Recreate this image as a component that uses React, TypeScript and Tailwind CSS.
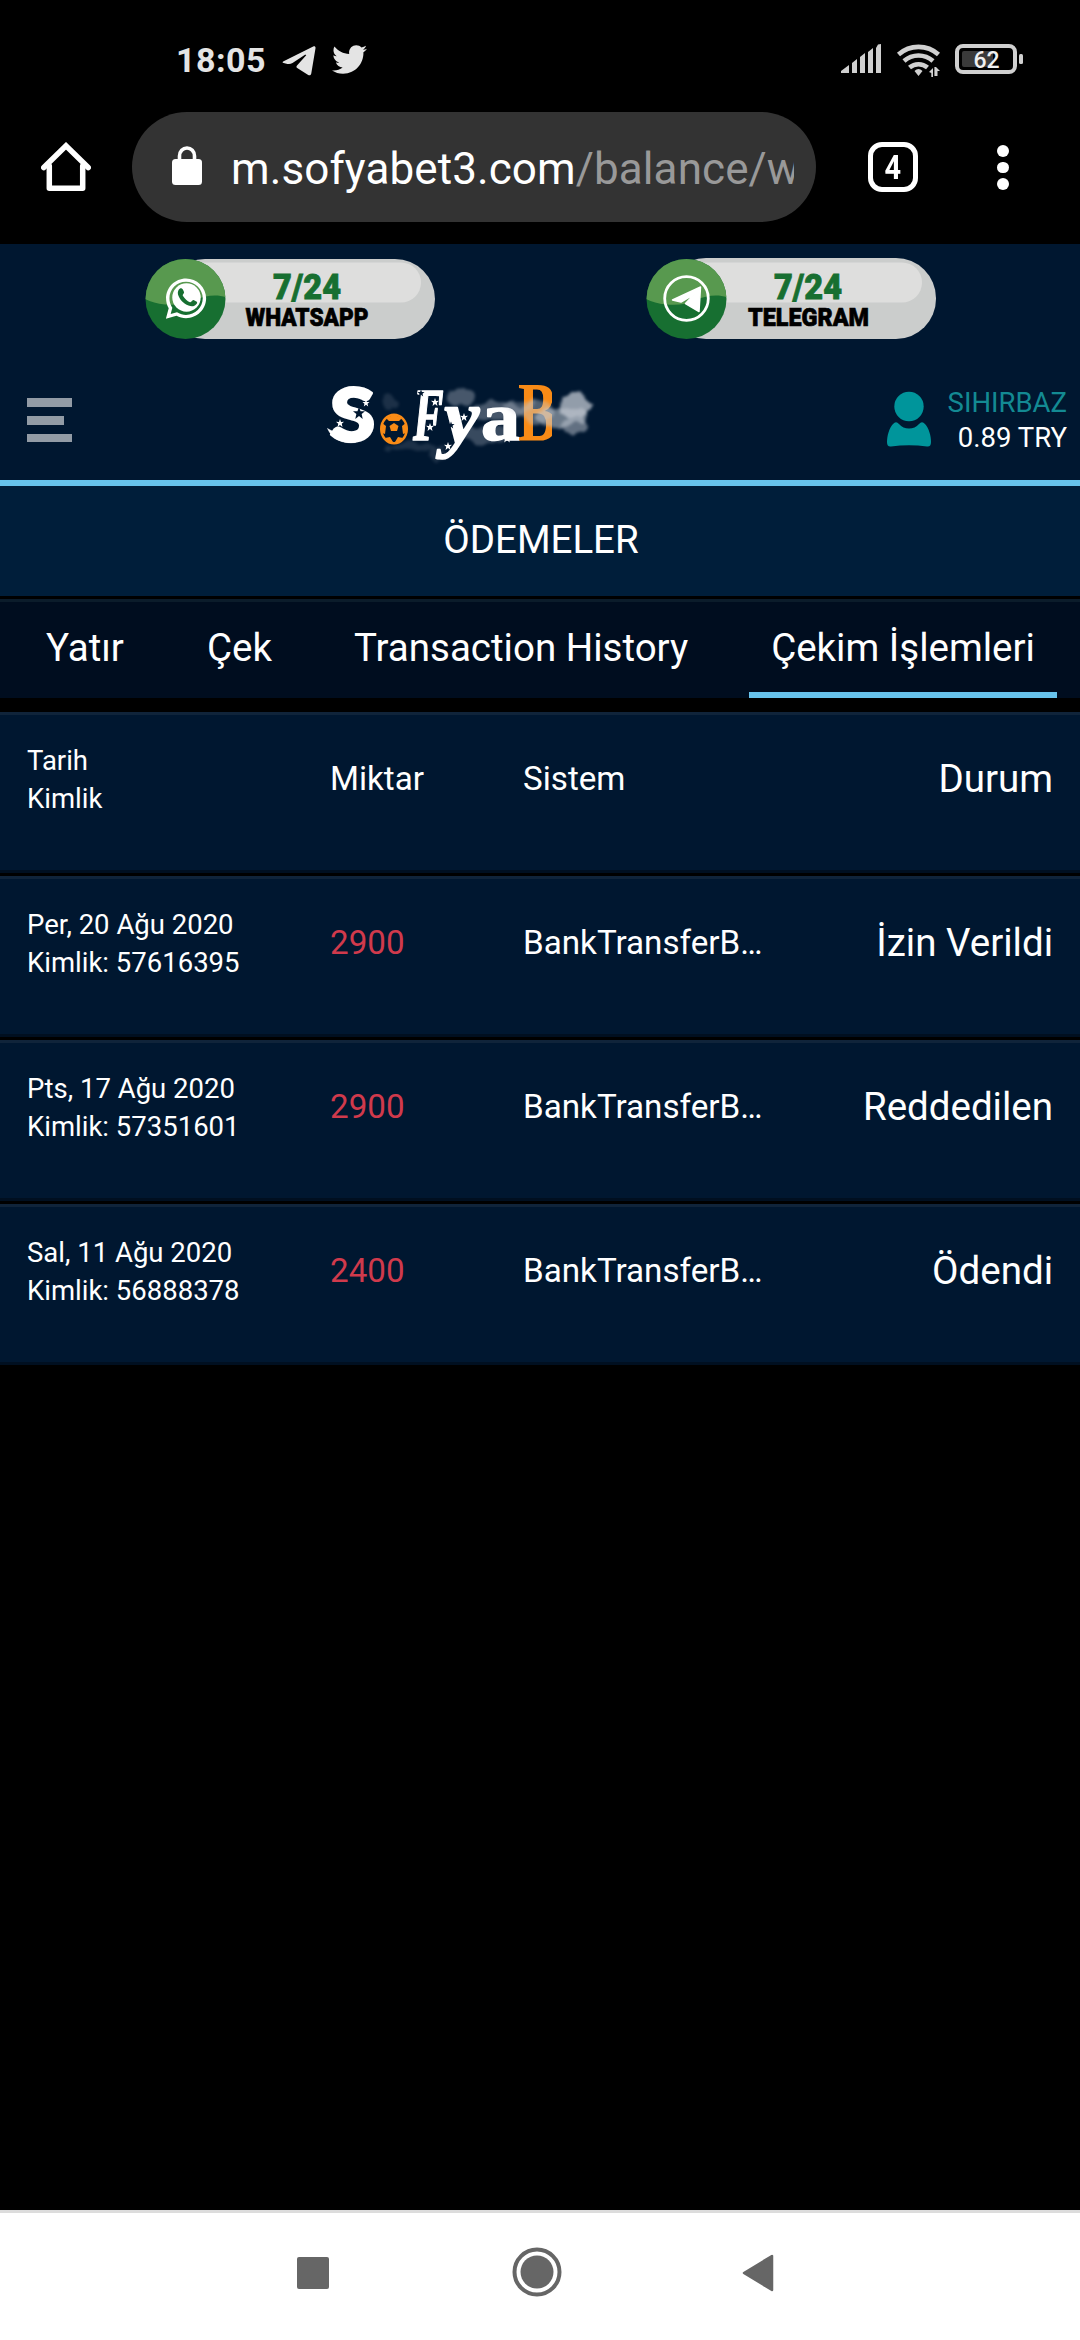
import React from "react";
import { FaTwitter, FaWhatsapp } from "react-icons/fa";

const rows = [
  { date: "Per, 20 Ağu 2020", id: "Kimlik: 57616395", amount: "2900", status: "İzin Verildi" },
  { date: "Pts, 17 Ağu 2020", id: "Kimlik: 57351601", amount: "2900", status: "Reddedilen" },
  { date: "Sal, 11 Ağu 2020", id: "Kimlik: 56888378", amount: "2400", status: "Ödendi" },
];

function StatusBar() {
  return (
    <div className="flex h-[112px] items-start justify-between pl-[176px] pr-[57px] text-[#e4e4e4]">
      <div className="flex pt-[40px]">
        <span className="w-[106px] text-[34px] font-bold leading-[40px] tracking-[0.500px]">18:05</span>
        <svg width="34" height="30" viewBox="0 0 34 30" className="mt-[6px]" fill="#e4e4e4">
          <path d="M1.6 15.2 31.2 .5c1.600-.7 2.500.2 2.300 1.700L29.300 27.200c-.3 2-1.600 2.600-3.100 1.700l-11-7c-1-.7-1-1.600-.2-2.500L24 9.600c.6-.8-.2-1.200-1-.8L10.500 17c-1.600 1-3.200 1.200-5 .9l-3.900-.9c-1.400-.4-1.300-1.200 0-1.800z" />
        </svg>
        <FaTwitter className="ml-[16px] mt-[2px] h-[35px] w-[35px]" />
      </div>
      <svg width="182" height="36" viewBox="0 0 182 36" className="mt-[43px]" fill="#d0d0d0">
        <path d="M0 30v-2L8 22v8zM11 30V20l5-4v14zM19 30V14l5-4v20zM27 30V9l5-4v25zM35 30V5l2-3.500 3-.5v29z" />
        <g fill="none" stroke="#d0d0d0" strokeWidth="4.600">
          <path d="M57.500 11.500a30 30 0 0 1 40 0" />
          <path d="M63 18a22 22 0 0 1 29 0" />
          <path d="M68.500 24.500a14 14 0 0 1 18 0" />
        </g>
        <path d="M73.500 28q4-4 8 0l-4 5zM88 29l4-4v9h-1.700v-4zM95 24v9h-1.600V24zm0 9V24l4 4h-2.500v5z" />
        <rect x="116" y="3" width="58" height="26" rx="6" fill="none" stroke="#d0d0d0" strokeWidth="4" />
        <rect x="121" y="8" width="31" height="16" rx="2" fill="#3a3a3a" />
        <rect x="178" y="11" width="4" height="10" rx="1.500" />
        <text x="145.500" y="25" textAnchor="middle" fontSize="23" fontWeight="500" fill="#f0f0f0">62</text>
      </svg>
    </div>
  );
}

function BrowserBar() {
  return (
    <div className="flex h-[132px] items-start">
      <svg width="50" height="50" viewBox="0 0 50 50" className="ml-[41px] mt-[30px]" fill="none" stroke="#fff" strokeWidth="5.500" strokeLinejoin="round" strokeLinecap="round">
        <path d="M2.800 25.500 25 3.800l22.200 21.700" strokeLinejoin="miter" />
        <path d="M8.300 24v22.300h33.400V24" />
      </svg>
      <div className="ml-[41px] flex h-[110px] w-[684px] items-start rounded-full bg-[#333333]">
        <svg width="30" height="40" viewBox="0 0 30 40" className="ml-[40px] mt-[34px] shrink-0">
          <rect x="0" y="13" width="30" height="26" rx="3.500" fill="#fff" />
          <path d="M7.500 14V10a7.500 8 0 0 1 15 0v4" fill="none" stroke="#fff" strokeWidth="3.600" />
        </svg>
        <div className="ml-[29px] mt-[31px] flex w-[563px] overflow-hidden whitespace-nowrap text-[44px] leading-[52px] tracking-[0.100px] text-white">
          <span>m.sofyabet3.com</span>
          <span className="text-[#999999]">/balance/w</span>
        </div>
      </div>
      <div className="ml-[52px] mt-[30px] flex h-[50px] w-[50px] items-center justify-center rounded-[14px] border-[5.500px] border-white">
        <span className="scale-x-[0.850] text-[34px] font-bold leading-none text-white">4</span>
      </div>
      <div className="ml-[79px] mt-[33px] flex flex-col gap-[5px]">
        <i className="h-[11.500px] w-[11.500px] rounded-full bg-white" />
        <i className="h-[11.500px] w-[11.500px] rounded-full bg-white" />
        <i className="h-[11.500px] w-[11.500px] rounded-full bg-white" />
      </div>
    </div>
  );
}

function ContactBadge({ kind }: { kind: "WHATSAPP" | "TELEGRAM" }) {
  const wa = kind === "WHATSAPP";
  const clip = "disc-" + kind;
  return (
    <svg width="290" height="82" viewBox="0 0 290 82">
      <defs>
        <clipPath id={clip}>
          <circle cx="40.500" cy="41" r="40" />
        </clipPath>
      </defs>
      <rect x="20" y={wa ? 1 : 0} width="270" height={wa ? 80 : 81} rx="40" fill="#cbcdcc" />
      <rect x="20" y="4.500" width="256" height="40" rx="20" fill="#dededd" />
      <g clipPath={`url(#${clip})`}>
        <rect width="82" height="82" fill="#176f31" />
        <path d="M0 0h82v39.500c-10-3.500-22-2-32 2.500s-18 5.500-30 4.500c-8-.7-14-2.500-20-5.500z" fill="#58994f" />
      </g>
      {wa ? (
        <g>
          <FaWhatsapp x="18" y="17.500" size="46" color="#fff" />
          <circle cx="41.500" cy="39.500" r="14.200" fill="#fff" />
          <path d="M35 30.500c1.500-1 3 0 4 3.500.5 1.500-2 2.800-1 4 2 3 4 5 7 6.200 1.500.5 2.500-2.700 4-2 3 1.300 4 2 2.500 3.800-2 2.600-5 2.800-8 1.500-5-2-9-6-10.500-11-.6-2.500.3-5 2-6z" fill="#176f31" />
        </g>
      ) : (
        <g>
          <circle cx="40.500" cy="40.500" r="21.800" fill="none" stroke="#fff" strokeWidth="2.800" />
          <path d="M26.500 42 54.500 29 53 53.500 39.500 45.500 48.500 36 35 44z" fill="#fff" stroke="#fff" strokeWidth="1.500" strokeLinejoin="round" />
        </g>
      )}
      <text x="128" y="40.500" fontSize="35" fontWeight="900" fill="#176f31" stroke="#176f31" strokeWidth=".8" textLength="68" lengthAdjust="spacingAndGlyphs">7/24</text>
      <text x={wa ? 100.500 : 102} y="67.500" fontSize="26.500" fontWeight="900" fill="#000" stroke="#000" strokeWidth=".7" textLength={wa ? 123 : 121} lengthAdjust="spacingAndGlyphs">{kind}</text>
    </svg>
  );
}

const star = "M0-5 1.300-1.400 5-1.500 2.200.9 3.100 5 0 2.500-3.100 5-2.200.9-5-1.500-1.300-1.400z";

function Logo() {
  return (
    <svg width="290" height="95" viewBox="0 0 290 95" fontFamily="Liberation Serif, serif" fontWeight="700">
      <defs>
        <filter id="puff" x="-30%" y="-30%" width="160%" height="160%">
          <feTurbulence type="fractalNoise" baseFrequency="0.070" numOctaves="3" seed="4" result="n" />
          <feDisplacementMap in="SourceGraphic" in2="n" scale="12" xChannelSelector="R" yChannelSelector="G" />
          <feGaussianBlur stdDeviation="1.600" />
        </filter>
        <clipPath id="cut">
          <rect x="195" y="5" width="42" height="65" />
        </clipPath>
      </defs>
      <g fill="#8d97a6" filter="url(#puff)" opacity=".5">
        <ellipse cx="147" cy="22" rx="14" ry="9" />
        <ellipse cx="74" cy="27" rx="9" ry="7" opacity=".4" />
        <ellipse cx="182" cy="36" rx="24" ry="9" />
        <ellipse cx="170" cy="60" rx="22" ry="9" opacity=".8" />
        <ellipse cx="100" cy="72" rx="30" ry="4" opacity=".4" />
        <ellipse cx="122" cy="80" rx="9" ry="6" opacity=".4" />
      </g>
      <g fill="#fff" stroke="#fff" strokeLinejoin="round">
        <text transform="translate(15 65.500) scale(1.120 1)" fontFamily="Lato, sans-serif" fontWeight="900" fontSize="73" strokeWidth="3">S</text>
        <path d="M12.500 53.500c6 4 15 6.500 26 4.500l2 9.500c-13 1.500-23-3-28-14z" strokeWidth=".5" />
        <text transform="translate(98 65) scale(.62 1)" fontSize="74" strokeWidth="1.500" fontStyle="italic">F</text>
        <text transform="translate(129 68) scale(1.050 1)" fontSize="76" strokeWidth="1.500" fontStyle="italic">y</text>
        <text transform="translate(166 65) scale(1.150 1)" fontSize="68" strokeWidth="1.500">a</text>
      </g>
      <ellipse cx="79" cy="54" rx="14" ry="15.500" fill="#f98b16" />
      <ellipse cx="79" cy="54" rx="11.500" ry="13" fill="#001730" />
      <path d="M71 43q8-5 16 0l-3 3h-10zM67 48l4 3-1 8-3-1zM91 48l-4 3 1 8 3-1zM70 63l5-1 3 5-3 1zM88 63l-5-1-3 5 3 1z" fill="#f98b16" />
      <path d="M79 48 83.500 51 82 56H76L74.500 51z" fill="#f98b16" />
      <g clipPath="url(#cut)">
        <text transform="translate(203 65.500) scale(.7 1)" fontSize="84" fill="#f98b16">B</text>
      </g>
      <g fill="#c3cad3" filter="url(#puff)">
        <ellipse cx="260" cy="31" rx="15" ry="12" opacity=".75" />
        <ellipse cx="247" cy="41" rx="25" ry="11" opacity=".55" />
        <ellipse cx="260" cy="50" rx="13" ry="9" opacity=".5" />
        <ellipse cx="222" cy="37" rx="18" ry="11" opacity=".4" />
        <ellipse cx="203" cy="31" rx="14" ry="7" opacity=".3" />
      </g>
      <g fill="#001730">
        <path d={star} transform="translate(44 38) scale(1.200)" />
        <path d={star} transform="translate(136 50) scale(.7)" />
        <path d={star} transform="translate(106 18) scale(.7)" />
      </g>
      <g fill="#fff">
        <path d={star} transform="translate(25 48) scale(.8)" />
        <path d={star} transform="translate(51 28) scale(.7)" />
        <path d={star} transform="translate(120 27) scale(.8)" />
        <path d={star} transform="translate(115 52) scale(.8)" />
        <path d={star} transform="translate(149 42) scale(.8)" />
        <path d={star} transform="translate(133 71) scale(.8)" />
        <path d={star} transform="translate(192 63) scale(.9)" />
      </g>
    </svg>
  );
}

function SiteHeader() {
  return (
    <header className="h-[242px] border-b-[6px] border-[#67c3ec] bg-[#001730]">
      <div className="flex pl-[145px] pt-[14px]">
        <ContactBadge kind="WHATSAPP" />
        <div className="w-[211px]" />
        <ContactBadge kind="TELEGRAM" />
      </div>
      <div className="flex h-[140px] items-start">
        <div className="ml-[27px] mt-[58px] flex w-[45px] flex-col gap-[9px]">
          <i className="h-[9px] w-[45px] bg-[#929ba5]" />
          <i className="h-[8.500px] w-[37px] bg-[#929ba5]" />
          <i className="h-[8.500px] w-[45px] bg-[#929ba5]" />
        </div>
        <div className="ml-[243px] mt-[35px]">
          <Logo />
        </div>
        <svg width="46" height="58" viewBox="0 0 46 58" className="ml-[281px] mt-[51px]" fill="#00959b">
          <circle cx="23" cy="15.500" r="14.700" />
          <path d="M7 33q3-3.500 6 0 4 4.500 10 4.500T33 33q3-3.500 6 0c4 4.500 6 12 6 18q0 5-4 4.500-18-2.500-36 0-4 .5-4-4.500c0-6 2-13.500 6-18z" />
        </svg>
        <div className="ml-auto mr-[13px] mt-[45px] text-right text-[27.500px] leading-[35px] text-white">
          <div className="text-[#138a93]">SIHIRBAZ</div>
          <div>0.89 TRY</div>
        </div>
      </div>
    </header>
  );
}

function Tabs() {
  return (
    <nav className="flex h-[99px] items-start border-t-[3px] border-[#0b1c2b] bg-[#000d1f] text-[38.500px] leading-[46px] text-white">
      <span className="ml-[46px] mt-[23px] w-[161px]">Yatır</span>
      <span className="mt-[23px] w-[147px]">Çek</span>
      <span className="mt-[23px] w-[395px]">Transaction History</span>
      <span className="h-[96px] w-[308px] border-b-[6px] border-[#67c3ec] pt-[23px] text-center">Çekim İşlemleri</span>
    </nav>
  );
}

function Row({ date, id, amount, system, status, red }: { date: string; id: string; amount: string; system: string; status: string; red?: boolean }) {
  return (
    <div className="mb-[3px] flex h-[161px] border-b-[3px] border-t-[3px] border-b-[#000f20] border-t-[#10243a] bg-[#001730] pr-[27px] text-white">
      <div className="ml-[27px] mt-[27px] w-[303px] text-[27.500px] leading-[38px]">
        <div>{date}</div>
        <div>{id}</div>
      </div>
      <div className={red ? "mt-[42px] w-[193px] text-[33.200px] leading-[44px] text-[#d03a4c]" : "mt-[42px] w-[193px] text-[33.200px] leading-[44px]"}>{amount}</div>
      <div className="mt-[42px] w-[245px] whitespace-nowrap text-[33.200px] leading-[44px]">{system}</div>
      <div className="ml-auto mt-[41px] text-[38.500px] leading-[46px]">{status}</div>
    </div>
  );
}

export default function App() {
  return (
    <div className="flex h-[2340px] w-[1080px] flex-col overflow-hidden bg-black font-[Roboto,sans-serif]">
      <StatusBar />
      <BrowserBar />
      <SiteHeader />
      <div className="flex h-[110px] items-center justify-center bg-[#001e3a] pb-[3px] pl-[2px] text-[38.500px] leading-[46px] text-white">ÖDEMELER</div>
      <div className="h-[3px]" />
      <Tabs />
      <main className="mt-[14px]">
        <Row date="Tarih" id="Kimlik" amount="Miktar" system="Sistem" status="Durum" />
        {rows.map((r) => (
          <Row key={r.id} {...r} system="BankTransferB…" red />
        ))}
      </main>
      <div className="mt-auto flex h-[130px] items-center border-t-[3px] border-[#dcdcdc] bg-white pl-[297px]">
        <div className="mb-[8px] h-[32px] w-[32px] rounded-[2px] bg-[#666]" />
        <svg width="50" height="50" viewBox="0 0 50 50" className="mb-[9px] ml-[183px]">
          <circle cx="25" cy="25" r="22.500" fill="none" stroke="#666" strokeWidth="4" />
          <circle cx="25" cy="25" r="16.500" fill="#666" />
        </svg>
        <svg width="32" height="38" viewBox="0 0 32 38" className="mb-[8px] ml-[180px]">
          <path d="M2 19 30 2v34z" fill="#666" stroke="#666" strokeWidth="2.500" strokeLinejoin="round" />
        </svg>
      </div>
    </div>
  );
}
